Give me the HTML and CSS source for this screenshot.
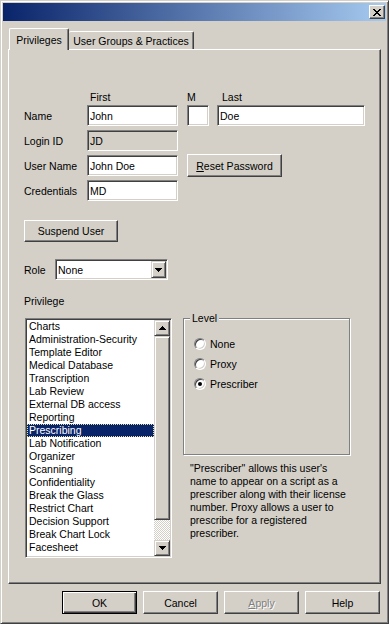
FILE: index.html
```html
<!DOCTYPE html>
<html lang="en">
<head>
  <meta charset="UTF-8">
  <meta name="viewport" content="width=device-width, initial-scale=1.0">
  <title>User Properties</title>
  <link rel="stylesheet" href="styles.css">
</head>
<body>
  <div class="window">
    <div class="titlebar">
      <button class="close-btn" title="Close">
        <svg width="8" height="7" viewBox="0 0 8 7"><path d="M0 0h2v1H0zM6 0h2v1H6zM1 1h2v1H1zM5 1h2v1H5zM2 2h4v1H2zM3 3h2v1H3zM2 4h4v1H2zM1 5h2v1H1zM5 5h2v1H5zM0 6h2v1H0zM6 6h2v1H6z" fill="#000"/></svg>
      </button>
    </div>

    <div class="content">
      <div class="tabs">
        <div class="tab active">Privileges</div>
        <div class="tab">User Groups &amp; Practices</div>
      </div>

      <div class="panel">
        <div class="name-head">
          <span></span>
          <span class="h-first">First</span>
          <span>M</span>
          <span class="h-last">Last</span>
        </div>
        <div class="fields">
          <label for="firstName">Name</label>
          <input class="input w-first" type="text" id="firstName" value="John">
          <input class="input w-m" type="text" id="middle" value="">
          <input class="input w-last" type="text" id="lastName" value="Doe">

          <label for="loginId">Login ID</label>
          <input class="input w-first disabled" type="text" id="loginId" value="JD" disabled>

          <label for="userName">User Name</label>
          <input class="input w-first" type="text" id="userName" value="John Doe">
          <button class="btn btn-reset"><u>R</u>eset Password</button>

          <label for="credentials">Credentials</label>
          <input class="input w-first" type="text" id="credentials" value="MD">
        </div>

        <button class="btn btn-suspend">Suspend User</button>

        <div class="role-row">
          <label class="role-label">Role</label>
          <div class="combo">
            <span>None</span>
            <span class="combo-btn">
              <svg width="7" height="4" viewBox="0 0 7 4"><path d="M0 0h7v1H6v1H5v1H4v1H3V3H2V2H1V1H0z" fill="#000"/></svg>
            </span>
          </div>
        </div>

        <div class="priv-label">Privilege</div>

        <div class="priv-row">
          <div class="listbox">
            <div class="list">
              <div class="item">Charts</div>
              <div class="item">Administration-Security</div>
              <div class="item">Template Editor</div>
              <div class="item">Medical Database</div>
              <div class="item">Transcription</div>
              <div class="item">Lab Review</div>
              <div class="item">External DB access</div>
              <div class="item">Reporting</div>
              <div class="item selected">Prescribing</div>
              <div class="item">Lab Notification</div>
              <div class="item">Organizer</div>
              <div class="item">Scanning</div>
              <div class="item">Confidentiality</div>
              <div class="item">Break the Glass</div>
              <div class="item">Restrict Chart</div>
              <div class="item">Decision Support</div>
              <div class="item">Break Chart Lock</div>
              <div class="item">Facesheet</div>
              <div class="item">Preferences Manager Module</div>
            </div>
            <div class="scrollbar">
              <span class="sb-btn">
                <svg width="7" height="4" viewBox="0 0 7 4"><path d="M3 0h1v1h1v1h1v1h1v1H0V3h1V2h1V1h1z" fill="#000"/></svg>
              </span>
              <span class="sb-thumb"></span>
              <span class="sb-track"></span>
              <span class="sb-btn">
                <svg width="7" height="4" viewBox="0 0 7 4"><path d="M0 0h7v1H6v1H5v1H4v1H3V3H2V2H1V1H0z" fill="#000"/></svg>
              </span>
            </div>
          </div>

          <div class="level-col">
            <div class="group">
              <div class="legend">Level</div>
              <div class="radios">
                <div class="radio-row"><span class="radio"></span>None</div>
                <div class="radio-row"><span class="radio"></span>Proxy</div>
                <div class="radio-row"><span class="radio checked"></span>Prescriber</div>
              </div>
            </div>
            <div class="level-desc">
              &quot;Prescriber&quot; allows this user's<br>
              name to appear on a script as a<br>
              prescriber along with their license<br>
              number. Proxy allows a user to<br>
              prescribe for a registered<br>
              prescriber.
            </div>
          </div>
        </div>
      </div>

      <div class="dialog-buttons">
        <button class="btn btn-dlg btn-default">OK</button>
        <button class="btn btn-dlg">Cancel</button>
        <button class="btn btn-dlg btn-disabled" disabled><u>A</u>pply</button>
        <button class="btn btn-dlg">Help</button>
      </div>
    </div>
  </div>
</body>
</html>
```

FILE: styles.css
```css
body {
  margin: 0;
  background-color: #d4d0c8;
  font-family: "Liberation Sans", Arial, sans-serif;
  font-size: 10.5px;
  color: #000;
}

.window {
  width: 389px;
  height: 624px;
  box-sizing: border-box;
  border: 1px solid;
  border-color: #d4d0c8 #404040 #404040 #d4d0c8;
  box-shadow: inset 1px 1px #fff, inset -1px -1px #808080;
  padding: 2px;
  display: flex;
  flex-direction: column;
}

.titlebar {
  height: 18px;
  background: linear-gradient(to right, #0a246a, #a6caf0);
  display: flex;
  align-items: center;
  justify-content: flex-end;
  padding-right: 1px;
}

.close-btn {
  width: 16px;
  height: 14px;
  padding: 0;
  box-sizing: border-box;
  background-color: #d4d0c8;
  border: 1px solid;
  border-color: #fff #404040 #404040 #fff;
  box-shadow: inset -1px -1px #808080;
  display: flex;
  align-items: center;
  justify-content: center;
}

.content {
  padding: 0 5px;
  display: flex;
  flex-direction: column;
}

/* tabs */
.tabs {
  display: flex;
  align-items: flex-end;
  height: 21px;
  margin-top: 7px;
  padding-left: 1px;
}

.tab {
  box-sizing: border-box;
  width: 125px;
  height: 18px;
  border-top: 1px solid #fff;
  border-right: 1px solid #404040;
  box-shadow: inset -1px 0 #808080;
  border-radius: 2px 2px 0 0;
  display: flex;
  align-items: center;
  justify-content: center;
}

.tab.active {
  width: 60px;
  height: 22px;
  border-left: 1px solid #fff;
  margin-bottom: -1px;
  position: relative;
  z-index: 1;
  background-color: #d4d0c8;
}

.panel {
  box-sizing: border-box;
  height: 535px;
  border: 1px solid;
  border-color: #fff #404040 #404040 #fff;
  box-shadow: inset -1px -1px #808080;
  padding: 41px 0 0 15px;
}

/* name / login fields */
.name-head {
  display: grid;
  grid-template-columns: 63px 100px 30px 148px;
  height: 13px;
  line-height: 13px;
  margin-bottom: 1px;
}

.h-first {
  padding-left: 3px;
}

.h-last {
  padding-left: 5px;
}

.fields {
  display: grid;
  grid-template-columns: 63px 100px 30px 148px;
  grid-auto-rows: 21px;
  row-gap: 4px;
  align-items: center;
}

.fields label {
  grid-column: 1;
}

.input {
  box-sizing: border-box;
  height: 21px;
  margin: 0;
  padding: 0 0 0 2px;
  border: 1px solid;
  border-color: #808080 #fff #fff #808080;
  box-shadow: inset 1px 1px #404040, inset -1px -1px #d4d0c8;
  background-color: #fff;
  font: inherit;
  color: #000;
  outline: none;
}

.input.disabled {
  background-color: #d4d0c8;
}

.w-first {
  width: 91px;
}

.w-m {
  width: 22px;
}

.w-last {
  width: 148px;
}

/* buttons */
.btn {
  box-sizing: border-box;
  height: 23px;
  padding: 0;
  border: 1px solid;
  border-color: #fff #404040 #404040 #fff;
  box-shadow: inset -1px -1px #808080;
  background-color: #d4d0c8;
  font: inherit;
  color: #000;
}

.btn-reset {
  grid-column: 3 / span 2;
  width: 95px;
}

.btn-suspend {
  display: block;
  width: 94px;
  height: 22px;
  margin-top: 19px;
}

.role-row {
  display: flex;
  align-items: center;
  height: 21px;
  margin-top: 17px;
}

.role-label {
  width: 31px;
}

.combo {
  box-sizing: border-box;
  width: 113px;
  height: 21px;
  padding: 1px 1px 1px 2px;
  border: 1px solid;
  border-color: #808080 #fff #fff #808080;
  box-shadow: inset 1px 1px #404040, inset -1px -1px #d4d0c8;
  background-color: #fff;
  display: flex;
  align-items: center;
  justify-content: space-between;
}

.combo-btn {
  box-sizing: border-box;
  width: 15px;
  height: 17px;
  background-color: #d4d0c8;
  border: 1px solid;
  border-color: #d4d0c8 #404040 #404040 #d4d0c8;
  box-shadow: inset 1px 1px #fff, inset -1px -1px #808080;
  display: flex;
  align-items: center;
  justify-content: center;
}

.priv-label {
  margin-top: 15px;
  line-height: 13px;
}

.priv-row {
  display: flex;
  align-items: flex-start;
  margin-top: 10px;
}

/* privilege list */
.listbox {
  box-sizing: border-box;
  width: 147px;
  height: 240px;
  margin-left: 1px;
  padding: 1px;
  border: 1px solid;
  border-color: #808080 #fff #fff #808080;
  box-shadow: inset 1px 1px #404040, inset -1px -1px #d4d0c8;
  background-color: #fff;
  display: flex;
}

.list {
  flex: 1;
  overflow: hidden;
}

.item {
  height: 13px;
  line-height: 13px;
  padding-left: 2px;
  white-space: nowrap;
}

.item.selected {
  background-color: #0a246a;
  color: #fff;
  outline: 1px dotted #e6e2a0;
  outline-offset: -1px;
}

.scrollbar {
  width: 16px;
  display: flex;
  flex-direction: column;
}

.sb-btn,
.sb-thumb {
  box-sizing: border-box;
  flex: none;
  background-color: #d4d0c8;
  border: 1px solid;
  border-color: #d4d0c8 #404040 #404040 #d4d0c8;
  box-shadow: inset 1px 1px #fff, inset -1px -1px #808080;
}

.sb-btn {
  height: 16px;
  display: flex;
  align-items: center;
  justify-content: center;
}

.sb-thumb {
  height: 184px;
}

.sb-track {
  flex: 1;
  background-image: conic-gradient(#fff 25%, #d4d0c8 0 50%, #fff 0 75%, #d4d0c8 0);
  background-size: 2px 2px;
}

/* level group */
.level-col {
  margin-left: 11px;
}

.group {
  box-sizing: border-box;
  width: 167px;
  height: 137px;
  padding-left: 10px;
  border: 1px solid #808080;
  box-shadow: inset 1px 1px #fff, 1px 1px #fff;
}

.legend {
  width: fit-content;
  margin: -7px 0 0 -4px;
  padding: 0 2px;
  line-height: 13px;
  background-color: #d4d0c8;
}

.radios {
  margin-top: 9px;
}

.radio-row {
  height: 20px;
  display: flex;
  align-items: center;
  gap: 4px;
}

.radio {
  box-sizing: border-box;
  width: 12px;
  height: 12px;
  border-radius: 50%;
  border: 1px solid;
  border-color: #808080 #fff #fff #808080;
  box-shadow: inset 1px 1px #404040, inset -1px -1px #d4d0c8;
  background-color: #fff;
  display: flex;
  align-items: center;
  justify-content: center;
}

.radio.checked::after {
  content: "";
  width: 4px;
  height: 4px;
  border-radius: 50%;
  background-color: #000;
}

.level-desc {
  margin-top: 7px;
  padding-left: 7px;
  line-height: 13px;
}

/* dialog buttons */
.dialog-buttons {
  display: flex;
  justify-content: flex-end;
  gap: 6px;
  margin-top: 7px;
  padding-right: 1px;
}

.btn-dlg {
  width: 75px;
}

.btn-default {
  border: 1px solid #000;
  box-shadow: inset 1px 1px #fff, inset -1px -1px #404040, inset -2px -2px #808080;
}

.btn-disabled {
  color: #808080;
  text-shadow: 1px 1px #fff;
}
```
